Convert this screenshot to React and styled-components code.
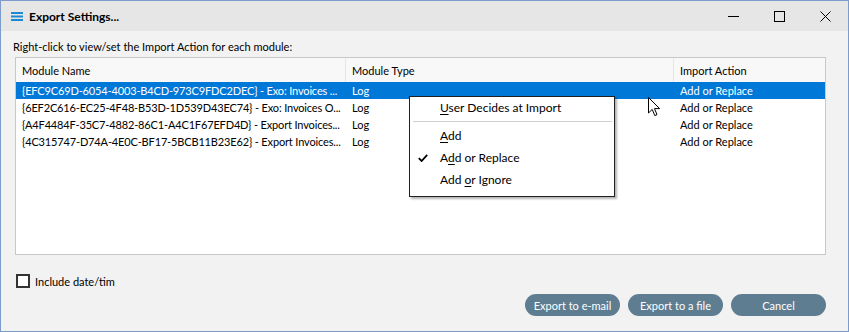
import React from "react";
import styled, { createGlobalStyle } from "styled-components";

const GlobalStyle = createGlobalStyle`
  html, body {
    margin: 0;
    padding: 0;
    background: #f2f2f2;
  }
  body {
    font-family: Lato, "Noto Sans", sans-serif;
    font-size: 11px;
    color: #000;
  }
`;

const modules = [
  { name: "{EFC9C69D-6054-4003-B4CD-973C9FDC2DEC} - Exo: Invoices ...", type: "Log", action: "Add or Replace" },
  { name: "{6EF2C616-EC25-4F48-B53D-1D539D43EC74} - Exo: Invoices O...", type: "Log", action: "Add or Replace" },
  { name: "{A4F4484F-35C7-4882-86C1-A4C1F67EFD4D} - Export Invoices...", type: "Log", action: "Add or Replace" },
  { name: "{4C315747-D74A-4E0C-BF17-5BCB11B23E62} - Export Invoices...", type: "Log", action: "Add or Replace" },
];

export default function App() {
  return (
    <>
      <GlobalStyle />
      <Window>
        <TitleBar>
          <AppIcon viewBox="0 0 12 9">
            <rect x="0" y="0" width="12" height="2" fill="#1a8ad4" />
            <rect x="0" y="3.5" width="12" height="2" fill="#1a8ad4" />
            <rect x="0" y="7" width="12" height="2" fill="#1a8ad4" />
          </AppIcon>
          <Title>Export Settings...</Title>
          <Controls>
            <ControlButton>
              <svg width="11" height="11" viewBox="0 0 11 11">
                <line x1="0" y1="5.5" x2="11" y2="5.5" stroke="#000" strokeWidth="1" />
              </svg>
            </ControlButton>
            <ControlButton>
              <svg width="11" height="11" viewBox="0 0 11 11">
                <rect x="0.5" y="0.5" width="10" height="10" fill="none" stroke="#000" strokeWidth="1" />
              </svg>
            </ControlButton>
            <ControlButton>
              <svg width="11" height="11" viewBox="0 0 11 11">
                <path d="M0.5 0.5 L10.5 10.5 M10.5 0.5 L0.5 10.5" stroke="#000" strokeWidth="1" />
              </svg>
            </ControlButton>
          </Controls>
        </TitleBar>

        <Body>
          <Hint>Right-click to view/set the Import Action for each module:</Hint>
          <ListView>
            <HeaderRow>
              <HeaderCell>Module Name</HeaderCell>
              <HeaderCell>Module Type</HeaderCell>
              <HeaderCell $last>Import Action</HeaderCell>
            </HeaderRow>
            {modules.map((m, i) => (
              <Row key={m.name} $selected={i === 0}>
                <Cell $tight>{m.name}</Cell>
                <Cell>{m.type}</Cell>
                <Cell>{m.action}</Cell>
              </Row>
            ))}

            <ContextMenu>
              <MenuItem>
                <u>U</u>ser Decides at Import
              </MenuItem>
              <Separator />
              <MenuItem>
                <u>A</u>dd
              </MenuItem>
              <MenuItem>
                <Check viewBox="0 0 10 8">
                  <path d="M0.8 4.2 L3.6 7 L9.2 0.8" fill="none" stroke="#000" strokeWidth="1.8" />
                </Check>
                A<u>d</u>d or Replace
              </MenuItem>
              <MenuItem>
                Add <u>o</u>r Ignore
              </MenuItem>
            </ContextMenu>

            <Pointer width="13" height="20" viewBox="0 0 13 20">
              <path
                d="M0.5 0.5 L0.5 16 L4.2 12.4 L6.8 18.6 L9 17.7 L6.5 11.6 L11.6 11.6 Z"
                fill="#fff"
                stroke="#000"
                strokeWidth="1"
              />
            </Pointer>
          </ListView>

          <Footer>
            <CheckRow>
              <CheckBox />
              <span>Include date/tim</span>
            </CheckRow>
            <Buttons>
              <PillButton>Export to e-mail</PillButton>
              <PillButton>Export to a file</PillButton>
              <PillButton>Cancel</PillButton>
            </Buttons>
          </Footer>
        </Body>
      </Window>
    </>
  );
}

const Window = styled.div`
  width: 849px;
  height: 332px;
  box-sizing: border-box;
  border: 1px solid #7c9dcc;
  display: flex;
  flex-direction: column;
  background: #f2f2f2;
`;

const TitleBar = styled.div`
  height: 30px;
  flex: none;
  background: #e6e6e6;
  display: flex;
  align-items: center;
  padding-left: 10px;
`;

const AppIcon = styled.svg`
  width: 12px;
  height: 9px;
  margin-right: 6px;
`;

const Title = styled.div`
  font-weight: bold;
  font-size: 12px;
  flex: 1;
`;

const Controls = styled.div`
  display: flex;
  height: 100%;
`;

const ControlButton = styled.div`
  width: 46px;
  display: flex;
  align-items: center;
  justify-content: center;
`;

const Body = styled.div`
  flex: 1;
  display: flex;
  flex-direction: column;
  padding: 8px 22px 0 14px;
`;

const Hint = styled.div`
  height: 15px;
  line-height: 15px;
  margin-left: -2px;
`;

const ListView = styled.div`
  position: relative;
  margin-top: 3px;
  height: 198px;
  box-sizing: border-box;
  border: 1px solid #c8c8c8;
  background: #fff;
`;

const columns = "330px 328px 1fr";

const HeaderRow = styled.div`
  display: grid;
  grid-template-columns: ${columns};
  height: 24px;
  background: #f8f8f8;
`;

const HeaderCell = styled.div`
  display: flex;
  align-items: center;
  padding-left: 6px;
  border-right: ${(p) => (p.$last ? "none" : "1px solid #e5e5e5")};
`;

const Row = styled.div`
  display: grid;
  grid-template-columns: ${columns};
  height: 17px;
  line-height: 17px;
  background: ${(p) => (p.$selected ? "#0078d7" : "transparent")};
  color: ${(p) => (p.$selected ? "#fff" : "#000")};
`;

const Cell = styled.div`
  padding-left: 6px;
  white-space: nowrap;
  overflow: hidden;
  text-overflow: ellipsis;
  letter-spacing: ${(p) => (p.$tight ? "-0.15px" : "normal")};
`;

const ContextMenu = styled.div`
  position: absolute;
  left: 393px;
  top: 38px;
  width: 206px;
  box-sizing: border-box;
  border: 1px solid #202020;
  background: #fff;
  padding: 0 0 5px;
  font-size: 12px;
  box-shadow: 2px 2px 2px rgba(0, 0, 0, 0.3);
`;

const MenuItem = styled.div`
  position: relative;
  height: 22px;
  line-height: 22px;
  padding-left: 30px;
  white-space: nowrap;
  u {
    text-underline-offset: 2px;
  }
`;

const Check = styled.svg`
  position: absolute;
  left: 8px;
  top: 7px;
  width: 10px;
  height: 8px;
`;

const Separator = styled.div`
  height: 1px;
  background: #d0d0d0;
  margin: 2px 2px 3px 3px;
`;

const Pointer = styled.svg`
  position: absolute;
  left: 632px;
  top: 39px;
`;

const Footer = styled.div`
  display: flex;
  flex-direction: column;
  margin-top: 19px;
`;

const CheckRow = styled.label`
  display: flex;
  align-items: center;
  gap: 5px;
  margin-left: 1px;
  height: 14px;
`;

const CheckBox = styled.span`
  width: 10px;
  height: 10px;
  border: 2px solid #333;
  background: #fff;
`;

const Buttons = styled.div`
  display: flex;
  justify-content: flex-end;
  gap: 8px;
  margin-top: 6px;
`;

const PillButton = styled.button`
  width: 95px;
  height: 22px;
  border: none;
  border-radius: 11px;
  background: #5e7d91;
  color: #fff;
  font-family: inherit;
  font-size: 11px;
  padding: 0;
`;
